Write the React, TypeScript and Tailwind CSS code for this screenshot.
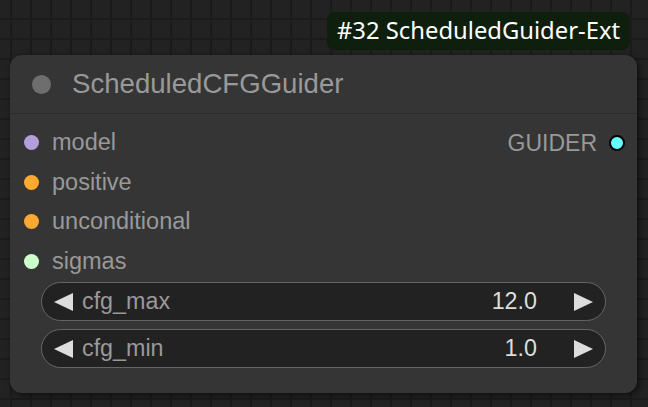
import React from 'react';

const inputs = [
  { name: 'model', color: 'bg-[#b39ddb]' },
  { name: 'positive', color: 'bg-[#ffa931]' },
  { name: 'unconditional', color: 'bg-[#ffa931]' },
  { name: 'sigmas', color: 'bg-[#cdffcd]' },
];

const widgets = [
  { name: 'cfg_max', value: '12.0' },
  { name: 'cfg_min', value: '1.0' },
];

function Arrow({ dir }: { dir: 'left' | 'right' }) {
  return (
    <svg width="19" height="18" viewBox="0 0 19 18" className="shrink-0">
      {dir === 'left' ? (
        <polygon points="19,0 19,18 0,9" fill="#dddddd" />
      ) : (
        <polygon points="0,0 0,18 19,9" fill="#dddddd" />
      )}
    </svg>
  );
}

export default function App() {
  return (
    <div
      className="relative w-[648px] h-[407px] overflow-hidden bg-[#222222] bg-[linear-gradient(#1b1b1b_2px,transparent_2px),linear-gradient(90deg,#1b1b1b_2px,transparent_2px)] bg-[size:20px_20px] bg-[position:10px_-2px]"
      style={{ fontFamily: '"Liberation Sans", Arial, sans-serif' }}
    >
      {/* id badge */}
      <div
        className="absolute left-[327px] top-[12px] h-[38px] px-[10px] flex items-center rounded-lg bg-[#0e1f0e] text-white text-[23.8px]"
        style={{ fontFamily: '"Noto Sans", "Open Sans", sans-serif' }}
      >
        #32 ScheduledGuider-Ext
      </div>

      {/* node */}
      <div className="absolute left-[10px] top-[55px] w-[627px] h-[338px] rounded-[12px] bg-[#353535] shadow-[2px_2px_6px_rgba(0,0,0,0.6)] flex flex-col">
        <div className="h-[59px] flex items-center border-b border-[#2b2b2b]">
          <div className="ml-[22px] w-[19px] h-[19px] rounded-full bg-[#6e6e6e]" />
          <span className="ml-[21px] text-[27.6px] text-[#999999]">ScheduledCFGGuider</span>
        </div>

        <div className="pt-[9px] flex flex-col">
          {inputs.map((inp, i) => (
            <div key={inp.name} className="h-[39.5px] flex items-center">
              <div className={`ml-[14px] w-[15px] h-[15px] rounded-full ${inp.color}`} />
              <span className="ml-[13px] text-[23.5px] text-[#999999]">{inp.name}</span>
              {i === 0 && (
                <div className="ml-auto mr-[12px] flex items-center">
                  <span className="text-[23px] text-[#999999]">GUIDER</span>
                  <div className="ml-[12px] w-[16px] h-[16px] rounded-full bg-[#66ffff] border-2 border-black" />
                </div>
              )}
            </div>
          ))}
        </div>

        <div className="mt-[1px] mx-[31px] flex flex-col gap-[8px]">
          {widgets.map((w) => (
            <div
              key={w.name}
              className="h-[39px] rounded-full border border-[#666666] bg-[#222222] flex items-center pl-[12px] pr-[12px]"
            >
              <Arrow dir="left" />
              <span className="ml-[9px] text-[23.3px] text-[#999999]">{w.name}</span>
              <span className="ml-auto mr-[37px] text-[23.3px] text-[#dddddd]">{w.value}</span>
              <Arrow dir="right" />
            </div>
          ))}
        </div>
      </div>
    </div>
  );
}
